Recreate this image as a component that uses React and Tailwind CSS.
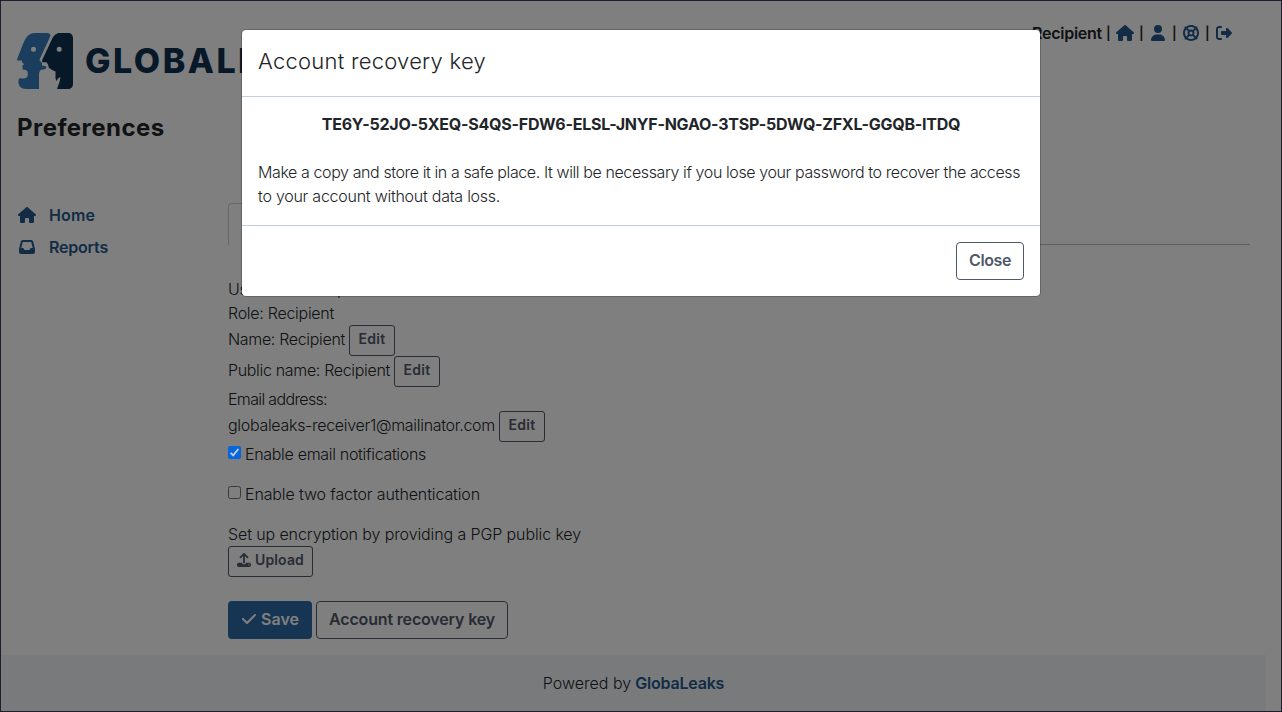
import React from "react";
import {
  FaHouse,
  FaUser,
  FaLifeRing,
  FaRightFromBracket,
  FaInbox,
  FaUpload,
  FaCheck,
} from "react-icons/fa6";

function Logo() {
  return (
    <div className="flex h-14 items-center">
      <svg viewBox="0 0 56 56" className="h-14 w-14 shrink-0">
        <path
          fill="#377abc"
          fillRule="evenodd"
          d="M18 0H30C33 0 34 2 33 4L23 25.5C22.4 27 22.6 28 23.6 28.6L25 30V32.5L29.5 33.4L28.5 36L23.5 37L22 40V56H9C4 56 1.5 53 1.5 49V47.5C1.5 45.5 3 45 5 45.5C9 46 11 44 10.8 41C10.8 39 10.5 37.5 8 36.8H6L5.2 33.5L7 31L5 29.2V27.6H1.2C0 27.6 -.2 26.6 .4 25.6L6 11C8.5 4.5 12 0 18 0ZM16.5 13.8a2.5 2.5 0 1 0 0 5a2.5 2.5 0 0 0 0-5Z"
        />
        <path
          fill="#0f3150"
          fillRule="evenodd"
          d="M43 0H51C54 0 56 2 56 5V51C56 54 54 56 51 56H40L42.5 49L43.5 44L41 45.5L39.5 48L38.5 45.5V38.5L36 37.4L32 35L31 31.5L29.5 29.2H26.2C25 29 24.8 28.2 25.2 27L34.8 6.5C36.6 2.5 39 0 43 0ZM42.2 13.8a2.5 2.5 0 1 0 0 5a2.5 2.5 0 0 0 0-5Z"
        />
      </svg>
      <span className="ml-[12px] text-[34px] leading-[56px] font-extrabold tracking-[2.5px] text-[#0f3150]">
        GLOBALEAKS
      </span>
    </div>
  );
}

function HeaderIcon({ children }) {
  return (
    <>
      <span className="flex w-[16.5px] justify-center text-[13px] font-semibold">|</span>
      <span className="flex w-[16.5px] justify-center text-[#24588c]">{children}</span>
    </>
  );
}

function SmallButton({ className = "", children }) {
  return (
    <button
      className={`flex h-[31px] shrink-0 items-center justify-center rounded-[3px] border border-[#505869] pb-[3px] text-sm font-semibold text-[#505869] ${className}`}
    >
      {children}
    </button>
  );
}

function EditRow({ className, children }) {
  return (
    <div className="flex h-[31px] items-start gap-1">
      <span className={`leading-[28px] ${className}`}>{children}</span>
      <SmallButton className="w-[46px] tracking-[0.3px]">Edit</SmallButton>
    </div>
  );
}

function NavItem({ icon, className, children }) {
  return (
    <a className="flex h-8 items-center pb-px text-[#24588c]">
      <span className="flex w-5 justify-center">{icon}</span>
      <span className={`ml-3 font-semibold ${className}`}>{children}</span>
    </a>
  );
}

function PreferencesForm() {
  return (
    <div className="mt-8 flex flex-col items-start font-light">
      <div className="tracking-[-0.3px]">Username: recipient</div>
      <div className="tracking-[-0.28px]">Role: Recipient</div>
      <EditRow className="tracking-[-0.33px]">Name: Recipient</EditRow>
      <EditRow className="tracking-[-0.33px]">Public name: Recipient</EditRow>
      <div className="tracking-[-0.65px]">Email address:</div>
      <EditRow className="tracking-[-0.3px]">globaleaks-receiver1@mailinator.com</EditRow>
      <label className="flex h-6 gap-1">
        <span className="relative z-10 mt-[4px] flex h-[13px] w-[13px] items-center justify-center rounded-[2px] bg-[#0566dc]">
          <svg viewBox="0 0 13 13" className="h-[13px] w-[13px]">
            <path d="M2.6 6.8L5.2 9.4L10.4 3" fill="none" stroke="#c3ccd6" strokeWidth="1.9" />
          </svg>
        </span>
        <span className="tracking-[-0.31px]">Enable email notifications</span>
      </label>
      <label className="mt-4 flex h-6 gap-1">
        <span className="mt-[4px] h-[13px] w-[13px] rounded-[2.5px] border border-[#767676] bg-white" />
        <span className="tracking-[-0.125px]">Enable two factor authentication</span>
      </label>
      <div className="mt-4 tracking-[-0.11px]">Set up encryption by providing a PGP public key</div>
      <SmallButton className="w-[85px] gap-1 tracking-[0.15px]">
        <FaUpload className="h-[14px] w-[14px]" />
        <span>Upload</span>
      </SmallButton>
      <div className="mt-6 flex gap-1 font-semibold">
        <button className="flex h-[38px] w-[84px] items-center justify-center gap-1 rounded-[4px] bg-[#2d6ba6] pb-[2px] text-white">
          <FaCheck className="h-4 w-4" />
          <span>Save</span>
        </button>
        <button className="flex h-[38px] w-[192px] items-center justify-center rounded-[4px] border border-[#505869] pb-[2px] tracking-[-0.16px] text-[#505869]">
          Account recovery key
        </button>
      </div>
    </div>
  );
}

function RecoveryKeyDialog() {
  return (
    <div className="w-[800px] rounded-[5px] border border-black/20 bg-white bg-clip-padding">
      <div className="flex h-[67px] items-center border-b border-[#c5cfda] px-4 pb-[5px] text-[22px] font-light tracking-[0.24px]">
        Account recovery key
      </div>
      <div className="px-4 pt-[15px] pb-[17px] font-light">
        <p className="text-center font-bold tracking-[-0.236px] whitespace-nowrap">
          TE6Y-52JO-5XEQ-S4QS-FDW6-ELSL-JNYF-NGAO-3TSP-5DWQ-ZFXL-GGQB-ITDQ
        </p>
        <p className="mt-6 whitespace-nowrap">
          <span className="tracking-[-0.4px]">
            Make a copy and store it in a safe place. It will be necessary if you lose your password to recover the access
          </span>
          <br />
          <span className="tracking-[-0.25px]">to your account without data loss.</span>
        </p>
      </div>
      <div className="flex justify-end border-t border-[#c5cfda] p-4">
        <button className="flex h-[38px] w-[68px] items-center justify-center rounded-[4px] border border-[#505869] pb-[2px] font-semibold tracking-[-0.4px] text-[#505869]">
          Close
        </button>
      </div>
    </div>
  );
}

export default function App() {
  return (
    <div className="relative flex h-[712px] w-[1282px] flex-col overflow-hidden border border-[#1e1e2e] bg-white font-['Inter',sans-serif] text-base leading-6 text-[#212529]">
      <header className="flex h-[88px] items-start justify-between pr-[49px] pl-4">
        <div className="pt-8">
          <Logo />
        </div>
        <div className="mt-5 flex h-6 items-center font-semibold">
          <span className="-mr-[2px] tracking-[-0.25px]">Recipient</span>
          <HeaderIcon>
            <FaHouse className="h-4 w-[18px] shrink-0" />
          </HeaderIcon>
          <HeaderIcon>
            <FaUser className="h-4 w-[14px] shrink-0" />
          </HeaderIcon>
          <HeaderIcon>
            <FaLifeRing className="h-4 w-4 shrink-0" />
          </HeaderIcon>
          <HeaderIcon>
            <FaRightFromBracket className="h-4 w-4 shrink-0" />
          </HeaderIcon>
        </div>
      </header>
      <h1 className="mt-[23px] pl-4 text-2xl leading-[32px] font-bold tracking-[0.45px]">Preferences</h1>
      <div className="mt-[55px] flex flex-1">
        <nav className="w-[227px] shrink-0 pl-4">
          <NavItem icon={<FaHouse className="h-4 w-[18px]" />} className="tracking-[0.12px]">
            Home
          </NavItem>
          <NavItem icon={<FaInbox className="h-4 w-4" />} className="tracking-[-0.2px]">
            Reports
          </NavItem>
        </nav>
        <main className="w-[1022px] pt-1">
          <div className="flex h-[42px]">
            <div className="w-[140px] rounded-t-[4px] border border-b-0 border-[#cbd2de] px-4 py-2">Preferences</div>
            <div className="flex-1 border-b border-[#b9c3d1]" />
          </div>
          <PreferencesForm />
        </main>
      </div>
      <footer className="flex h-[56px] w-[1265px] items-center justify-center gap-1 bg-[#f2f5f9] pb-px">
        <span className="font-light">Powered by</span>
        <span className="font-semibold tracking-[-0.2px] text-[#24588c]">GlobaLeaks</span>
      </footer>
      <div className="absolute inset-0 z-[5] bg-black/50" />
      <div className="absolute inset-x-0 top-7 z-20 flex justify-center">
        <RecoveryKeyDialog />
      </div>
    </div>
  );
}
